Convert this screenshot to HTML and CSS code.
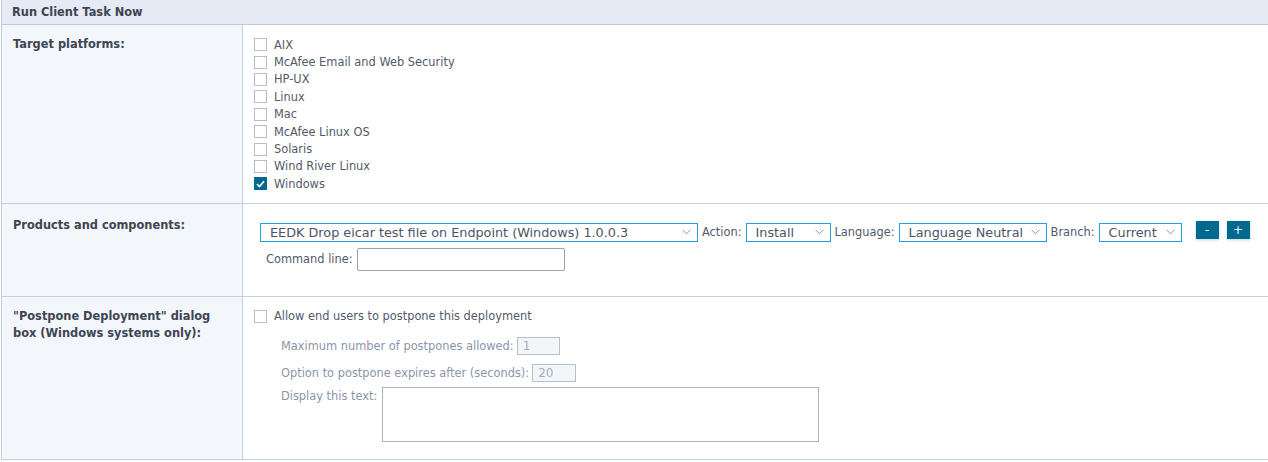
FILE: index.html
```html
<!DOCTYPE html>
<html>
<head>
<meta charset="utf-8">
<link rel="stylesheet" href="styles.css">
</head>
<body>
<div class="panel">
  <div class="panel-head">Run Client Task Now</div>

  <div class="row row-platforms">
    <div class="label">Target platforms:</div>
    <div class="content">
      <ul class="checklist">
        <li><span class="cb"></span>AIX</li>
        <li><span class="cb"></span>McAfee Email and Web Security</li>
        <li><span class="cb"></span>HP-UX</li>
        <li><span class="cb"></span>Linux</li>
        <li><span class="cb"></span>Mac</li>
        <li><span class="cb"></span>McAfee Linux OS</li>
        <li><span class="cb"></span>Solaris</li>
        <li><span class="cb"></span>Wind River Linux</li>
        <li><span class="cb checked"><svg width="9" height="8" viewBox="0 0 9 8"><path d="M1 4.2 L3.5 6.5 L8 1.2" fill="none" stroke="#fff" stroke-width="1.6"/></svg></span>Windows</li>
      </ul>
    </div>
  </div>

  <div class="row row-products">
    <div class="label">Products and components:</div>
    <div class="content">
      <div class="product-line">
        <div class="select sel-product"><span>EEDK Drop eicar test file on Endpoint (Windows) 1.0.0.3</span><svg class="chev" width="9" height="6" viewBox="0 0 9 6"><path d="M0.5 0.8 L4.5 4.8 L8.5 0.8" fill="none" stroke="#8a94a6" stroke-width="1"/></svg></div>
        <span class="fld">Action:</span>
        <div class="select sel-action"><span>Install</span><svg class="chev" width="9" height="6" viewBox="0 0 9 6"><path d="M0.5 0.8 L4.5 4.8 L8.5 0.8" fill="none" stroke="#8a94a6" stroke-width="1"/></svg></div>
        <span class="fld">Language:</span>
        <div class="select sel-lang"><span>Language Neutral</span><svg class="chev" width="9" height="6" viewBox="0 0 9 6"><path d="M0.5 0.8 L4.5 4.8 L8.5 0.8" fill="none" stroke="#8a94a6" stroke-width="1"/></svg></div>
        <span class="fld">Branch:</span>
        <div class="select sel-branch"><span>Current</span><svg class="chev" width="9" height="6" viewBox="0 0 9 6"><path d="M0.5 0.8 L4.5 4.8 L8.5 0.8" fill="none" stroke="#8a94a6" stroke-width="1"/></svg></div>
        <div class="btns">
          <button class="btn">-</button>
          <button class="btn">+</button>
        </div>
      </div>
      <div class="cmd-line">
        <span class="fld">Command line:</span>
        <span class="text-input"></span>
      </div>
    </div>
  </div>

  <div class="row row-postpone">
    <div class="label">"Postpone Deployment" dialog box (Windows systems only):</div>
    <div class="content">
      <div class="allow"><span class="cb"></span>Allow end users to postpone this deployment</div>
      <div class="sub">
        <div class="sub-line"><span>Maximum number of postpones allowed:</span><span class="dis-input w42">1</span></div>
        <div class="sub-line"><span>Option to postpone expires after (seconds):</span><span class="dis-input w44">20</span></div>
        <div class="sub-line top"><span>Display this text:</span><span class="textarea"></span></div>
      </div>
    </div>
  </div>
</div>
</body>
</html>
```

FILE: styles.css
```css
html, body {
  margin: 0;
  padding: 0;
  background: #ffffff;
}

body {
  font-family: "DejaVu Sans", Verdana, sans-serif;
  font-size: 11.4px;
  color: #525a6b;
}

.panel {
  margin-left: 1px;
  border-left: 1px solid #c3cfdb;
}

.panel-head {
  height: 24px;
  line-height: 24px;
  padding-left: 10px;
  background: #e6eaf4;
  border-bottom: 1px solid #b9cbd9;
  font-weight: bold;
  color: #3d4450;
}

.row {
  display: grid;
  grid-template-columns: 241px 1fr;
  border-bottom: 1px solid #c3d1de;
}

.label {
  background: #f3f6fa;
  border-right: 1px solid #c3d1de;
  font-weight: bold;
  color: #3d4553;
  padding: 11px 30px 0 11px;
  line-height: 17.4px;
}

.content {
  background: #fff;
}

/* checkboxes */
.cb {
  display: inline-block;
  box-sizing: border-box;
  width: 13px;
  height: 13px;
  border: 1px solid #b7bcc6;
  background: #fff;
  margin-right: 7px;
  flex: none;
}
.cb.checked {
  background: #006a8e;
  border-color: #006a8e;
  display: inline-flex;
  align-items: center;
  justify-content: center;
}

.row-platforms .content {
  padding: 11px 0 10px 11px;
}
.checklist {
  list-style: none;
  margin: 0;
  padding: 0;
}
.checklist li {
  display: flex;
  align-items: center;
  height: 17.4px;
}

/* products */
.row-products .label {
  padding-top: 13px;
  height: 79px;
}
.row-products .content {
  padding: 19px 0 0 17px;
}
.product-line {
  display: flex;
  align-items: center;
  gap: 4px;
  height: 19px;
}
.select {
  box-sizing: border-box;
  height: 19px;
  border: 1px solid #1ea5e0;
  display: flex;
  align-items: center;
  justify-content: space-between;
  padding: 0 6px 0 9px;
  font-size: 12.8px;
  color: #4b5568;
  background: #fff;
  white-space: nowrap;
}
.sel-product { width: 438px; }
.sel-action { width: 85px; }
.sel-lang { width: 148px; }
.sel-branch { width: 83px; }
.fld {
  white-space: nowrap;
  color: #525a6b;
}
.btns {
  display: flex;
  gap: 8px;
  margin-left: 10px;
  align-self: flex-start;
  margin-top: -2px;
}
.btn {
  width: 23px;
  height: 18px;
  border: none;
  padding: 0;
  background: #006a8e;
  color: #fff;
  font-family: "DejaVu Sans", Verdana, sans-serif;
  font-size: 12px;
  line-height: 18px;
  box-shadow: 0 1px 3px rgba(0,0,0,0.2);
}
.cmd-line {
  display: flex;
  align-items: center;
  gap: 4px;
  margin-top: 6px;
  padding-left: 6px;
}
.text-input {
  display: block;
  box-sizing: border-box;
  width: 208px;
  height: 23px;
  border: 1px solid #9aa0ac;
  border-radius: 2px;
  background: #fff;
}

/* postpone */
.row-postpone .label {
  line-height: 17px;
  padding-top: 11px;
  height: 151px;
}
.row-postpone .content {
  padding: 12px 0 0 11px;
}
.allow {
  display: flex;
  align-items: center;
  height: 15px;
}
.sub {
  padding-left: 27px;
  margin-top: 13px;
}
.sub-line {
  display: flex;
  align-items: center;
  gap: 3px;
  color: #8b95aa;
  margin-bottom: 9px;
}
.sub-line.top {
  align-items: flex-start;
  margin-top: -4px;
  gap: 5px;
}
.sub-line.top span:first-child {
  margin-top: 2px;
}
.dis-input {
  display: block;
  box-sizing: border-box;
  height: 18px;
  border: 1px solid #b6c0c8;
  background: #f3f6f8;
  color: #a3acbd;
  font-size: 12px;
  line-height: 16px;
  padding-left: 5px;
}
.w42 { width: 43px; }
.w44 { width: 44px; }
.textarea {
  display: block;
  box-sizing: border-box;
  width: 437px;
  height: 55px;
  border: 1px solid #aab3b3;
  background: #fff;
}
```
